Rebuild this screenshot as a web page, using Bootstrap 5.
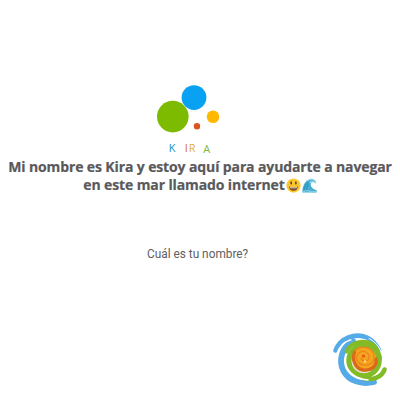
<!DOCTYPE html>
<html lang="es">
<head>
<meta charset="utf-8">
<meta name="viewport" content="width=device-width, initial-scale=1">
<title>Kira</title>
<link href="https://cdn.jsdelivr.net/npm/bootstrap@5.3.0/dist/css/bootstrap.min.css" rel="stylesheet">
<style>
body{height:400px;overflow:hidden;background:#fff;color:#58585a}
.kira-screen{height:400px;padding-top:80px}
.kira-logo{width:80px;height:78px;margin-left:-16px}
.kira-logo text{font:500 11px "Open Sans",sans-serif}
.greeting{font:700 14px/18px "Open Sans",sans-serif;letter-spacing:-.12px;white-space:nowrap;color:#5a595b;-webkit-text-stroke:.2px #5a595b}
.greeting svg{width:15px;height:15px;vertical-align:-2.5px;margin-left:1px}
.question{font:13px/18px Roboto,sans-serif;margin-top:51px;margin-right:5px;transform:scaleX(.91);color:#606060}
.swirl{width:60px;height:60px;margin:auto 10px 10px auto}
</style>
</head>
<body>
<main class="kira-screen d-flex flex-column align-items-center text-center">
<svg class="kira-logo flex-shrink-0" viewBox="152 80 80 78" role="img" aria-label="Kira">
<circle cx="172.8" cy="116.6" r="15.8" fill="#7dbb00"/>
<circle cx="194" cy="97.6" r="12.4" fill="#09a1f1"/>
<circle cx="213" cy="116.8" r="6.3" fill="#ffb901"/>
<circle cx="197" cy="126.3" r="3.2" fill="#d75423"/>
<text x="168.7" y="152" fill="#1d93bb">K</text>
<text x="184.7" y="152" fill="#d2722f">I</text>
<text x="188.7" y="152" fill="#e5ad38">R</text>
<text x="203.2" y="153.2" fill="#80b93a">A</text>
</svg>
<h1 class="greeting mb-0">Mi nombre es Kira y estoy aquí para ayudarte a navegar<br>en este mar llamado internet<svg viewBox="0 0 16 16" role="img" aria-label="sonrisa"><circle cx="8" cy="8" r="7.6" fill="#fcc72e"/><ellipse cx="5.5" cy="5.2" rx="1" ry="1.8" fill="#65432b"/><ellipse cx="10.5" cy="5.2" rx="1" ry="1.8" fill="#65432b"/><path d="M3 9Q8 10.5 13 9Q12 13.5 8 13.5T3 9Z" fill="#7b4c2b"/><path d="M4 9.5Q8 10.6 12 9.5L11.5 10.7Q8 11.3 4.5 10.7Z" fill="#fff"/></svg><svg viewBox="0 0 16 16" role="img" aria-label="ola"><path d="M.5 15Q0 8 5 3Q9-.5 13 2Q15.5 3.5 14.5 5Q10 3 9.3 6.5Q9 11 15.7 13V15.5H.5Z" fill="#45afd3"/><path d="M2 13Q3 7 7.5 4M5 13Q5 9 7 6.5" fill="none" stroke="#2b91bb" stroke-width="1.1"/><path d="M5 3.3Q9-.2 13 2.2Q15 3.5 14.4 5.2Q11 2.4 8 5" fill="none" stroke="#a6dcea" stroke-width="1.3"/><path d="M1 15Q5 12.5 8 14T15.5 14" fill="none" stroke="#7fcbe0" stroke-width="1.5"/></svg></h1>
<p class="question mb-0">Cuál es tu nombre?</p>
<svg class="swirl flex-shrink-0" viewBox="330 330 60 60" fill="none" stroke-linecap="round" aria-hidden="true">
<path d="M353 341C342 347 338 360 343.500 371C349 381 361 385 374 382" stroke="#55aae8" stroke-width="5.800"/>
<path d="M335.500 350.500C340 338 355 332.500 367 337.500C372 340 376 344 379 350" stroke="#55aae8" stroke-width="4.600"/>
<path d="M337 354C339 346 344 341.500 351 339.800" stroke="#fff" stroke-width="1.300"/>
<circle cx="364" cy="360.500" r="15" stroke="#83bb27" stroke-width="5.500"/>
<path d="M346.500 351.500C350 344 358 341 366 342C374 343 379.500 350 380 359" stroke="#83bb27" stroke-width="4"/>
<path d="M384.500 369.500C382 377 373 381 363 378" stroke="#83bb27" stroke-width="4.600"/>
<path d="M345 359C344.500 369 353 379 368 380" stroke="#fff" stroke-width="1.500"/>
<path d="M369 338.500C375 341.500 380 347 381.500 354" stroke="#fff" stroke-width="1"/>
<circle cx="364" cy="359.500" r="12.300" fill="#f3a51d"/>
<path d="M352 361C353 371 362 375 370 371" stroke="#e4e2d5" stroke-width="1.200"/>
<path d="M354.500 352C351 363 358 371 367 370C373 369 377 366 376 359" stroke="#d96a1b" stroke-width="3.200"/>
<path d="M355 351C361 344 372 347 374 355C375 362 370 366 364 365C357 364 355 358 358 354C362 349 369 352 369 357C369 362 362 362 361 358" stroke="#ee811e" stroke-width="1.200"/>
<circle cx="363.500" cy="356" r="1.600" fill="#e5541b"/>
<circle cx="365" cy="361.500" r="1.200" fill="#ffe083"/>
</svg>
</main>
<script src="https://cdn.jsdelivr.net/npm/bootstrap@5.3.0/dist/js/bootstrap.bundle.min.js"></script>
</body>
</html>
